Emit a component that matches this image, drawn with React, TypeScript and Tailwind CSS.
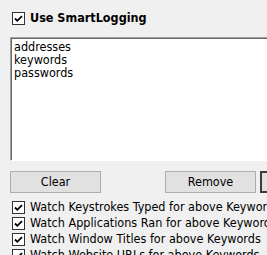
import React from 'react'

function CheckBox() {
  return (
    <svg width="13" height="13" viewBox="0 0 13 13" className="shrink-0">
      <rect x="0.5" y="0.5" width="12" height="12" fill="#fff" stroke="#333" />
      <polyline points="3,6.5 5.3,8.8 10,4.1" fill="none" stroke="#000" strokeWidth="1.8" />
    </svg>
  )
}

const watchItems = [
  'Watch Keystrokes Typed for above Keywords',
  'Watch Applications Ran for above Keywords',
  'Watch Window Titles for above Keywords',
  'Watch Website URLs for above Keywords',
]

export default function App() {
  return (
    <div className="w-[267px] h-[255px] overflow-hidden bg-[#f0f0f0] text-black font-['DejaVu_Sans_Condensed','DejaVu_Sans',sans-serif] text-[12.5px]">
      <div className="flex items-center h-[13px] mt-[12px] pl-[12px]">
        <CheckBox />
        <span className="ml-[5px] font-bold whitespace-nowrap">Use SmartLogging</span>
      </div>

      <div className="ml-[10px] mt-[12px] w-[290px] h-[124px] bg-white border border-t-[#a0a0a0] border-l-[#a0a0a0] border-r-white border-b-white shadow-[inset_1px_1px_0_#696969] pl-[3px] pt-[2px] leading-[13px]">
        <div>addresses</div>
        <div>keywords</div>
        <div>passwords</div>
      </div>

      <div className="flex items-center w-[400px] ml-[10px] mt-[10px] h-[22px] whitespace-nowrap">
        <button className="shrink-0 w-[91px] h-[22px] bg-[#e1e1e1] border border-[#adadad]">Clear</button>
        <button className="shrink-0 ml-[64px] w-[91px] h-[22px] bg-[#e1e1e1] border border-[#adadad]">Remove</button>
        <button className="shrink-0 ml-[4px] w-[91px] h-[22px] bg-[#e1e1e1] border-2 border-[#3c3c3c]">Add</button>
      </div>

      <div className="mt-[6px]">
        {watchItems.map((t) => (
          <div key={t} className="flex items-center h-[16px] pl-[12px] whitespace-nowrap">
            <CheckBox />
            <span className="ml-[5px]">{t}</span>
          </div>
        ))}
      </div>
    </div>
  )
}
